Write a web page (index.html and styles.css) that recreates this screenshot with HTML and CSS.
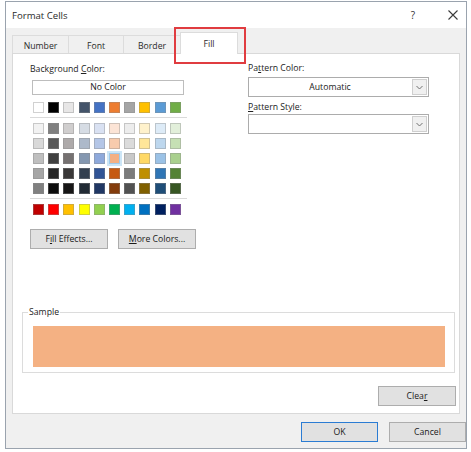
FILE: index.html
```html
<!DOCTYPE html>
<html>
<head>
<meta charset="utf-8">
<title>Format Cells</title>
<link rel="stylesheet" href="styles.css">
</head>
<body>
<div class="dialog">
  <div class="titlebar">
    <span class="title">Format Cells</span>
    <span class="help">?</span>
    <span class="close"><svg width="10" height="10" viewBox="0 0 10 10"><path d="M0.5 0.5L9.5 9.5M9.5 0.5L0.5 9.5" stroke="#3a3a3a" stroke-width="1.1" fill="none"/></svg></span>
  </div>
  <div class="tabs">
    <div class="tab t-number">Number</div>
    <div class="tab t-font">Font</div>
    <div class="tab t-border">Border</div>
    <div class="tab active">Fill<span class="highlight"></span></div>
  </div>
  <div class="panel">
    <div class="top">
      <div class="left">
        <div class="label">Background <u>C</u>olor:</div>
        <div class="nocolor">No Color</div>
        <div class="swatches">
          <span class="sw" style="background:#ffffff"></span>
          <span class="sw" style="background:#000000"></span>
          <span class="sw" style="background:#e7e6e6"></span>
          <span class="sw" style="background:#44546a"></span>
          <span class="sw" style="background:#4472c4"></span>
          <span class="sw" style="background:#ed7d31"></span>
          <span class="sw" style="background:#a5a5a5"></span>
          <span class="sw" style="background:#ffc000"></span>
          <span class="sw" style="background:#5b9bd5"></span>
          <span class="sw" style="background:#70ad47"></span>
        </div>
        <div class="sep"></div>
        <div class="swatches">
          <span class="sw" style="background:#f2f2f2"></span>
          <span class="sw" style="background:#808080"></span>
          <span class="sw" style="background:#d0cece"></span>
          <span class="sw" style="background:#d6dce4"></span>
          <span class="sw" style="background:#d9e1f2"></span>
          <span class="sw" style="background:#fce4d6"></span>
          <span class="sw" style="background:#ededed"></span>
          <span class="sw" style="background:#fff2cc"></span>
          <span class="sw" style="background:#ddebf7"></span>
          <span class="sw" style="background:#e2efda"></span>

          <span class="sw" style="background:#d9d9d9"></span>
          <span class="sw" style="background:#595959"></span>
          <span class="sw" style="background:#aeaaaa"></span>
          <span class="sw" style="background:#adb9ca"></span>
          <span class="sw" style="background:#b4c6e7"></span>
          <span class="sw" style="background:#f8cbad"></span>
          <span class="sw" style="background:#dbdbdb"></span>
          <span class="sw" style="background:#ffe699"></span>
          <span class="sw" style="background:#bdd7ee"></span>
          <span class="sw" style="background:#c6e0b4"></span>

          <span class="sw" style="background:#bfbfbf"></span>
          <span class="sw" style="background:#404040"></span>
          <span class="sw" style="background:#757171"></span>
          <span class="sw" style="background:#8497b0"></span>
          <span class="sw" style="background:#8ea9db"></span>
          <span class="sw selected" style="background:#f4b084"></span>
          <span class="sw" style="background:#c9c9c9"></span>
          <span class="sw" style="background:#ffd966"></span>
          <span class="sw" style="background:#9bc2e6"></span>
          <span class="sw" style="background:#a9d08e"></span>

          <span class="sw" style="background:#a6a6a6"></span>
          <span class="sw" style="background:#262626"></span>
          <span class="sw" style="background:#3a3838"></span>
          <span class="sw" style="background:#333f4f"></span>
          <span class="sw" style="background:#305496"></span>
          <span class="sw" style="background:#c65911"></span>
          <span class="sw" style="background:#7b7b7b"></span>
          <span class="sw" style="background:#bf8f00"></span>
          <span class="sw" style="background:#2f75b5"></span>
          <span class="sw" style="background:#548235"></span>

          <span class="sw" style="background:#808080"></span>
          <span class="sw" style="background:#0d0d0d"></span>
          <span class="sw" style="background:#171616"></span>
          <span class="sw" style="background:#222b35"></span>
          <span class="sw" style="background:#203764"></span>
          <span class="sw" style="background:#833c0c"></span>
          <span class="sw" style="background:#525252"></span>
          <span class="sw" style="background:#806000"></span>
          <span class="sw" style="background:#1f4e78"></span>
          <span class="sw" style="background:#375623"></span>
        </div>
        <div class="sep"></div>
        <div class="swatches">
          <span class="sw" style="background:#c00000"></span>
          <span class="sw" style="background:#ff0000"></span>
          <span class="sw" style="background:#ffc000"></span>
          <span class="sw" style="background:#ffff00"></span>
          <span class="sw" style="background:#92d050"></span>
          <span class="sw" style="background:#00b050"></span>
          <span class="sw" style="background:#00b0f0"></span>
          <span class="sw" style="background:#0070c0"></span>
          <span class="sw" style="background:#002060"></span>
          <span class="sw" style="background:#7030a0"></span>
        </div>
        <div class="btnrow">
          <button class="btn wide">F<u>i</u>ll Effects...</button>
          <button class="btn wide"><u>M</u>ore Colors...</button>
        </div>
      </div>
      <div class="right">
        <div class="label lbl-pc">Pa<u>t</u>tern Color:</div>
        <div class="dropdown dd1">
          <span class="value">Automatic</span>
          <span class="arrow"><svg width="7" height="5" viewBox="0 0 7 5"><path d="M0.5 1L3.5 4L6.5 1" stroke="#707070" stroke-width="1" fill="none"/></svg></span>
        </div>
        <div class="label lbl-ps"><u>P</u>attern Style:</div>
        <div class="dropdown dd2">
          <span class="value"></span>
          <span class="arrow"><svg width="7" height="5" viewBox="0 0 7 5"><path d="M0.5 1L3.5 4L6.5 1" stroke="#707070" stroke-width="1" fill="none"/></svg></span>
        </div>
      </div>
    </div>
    <div class="sample">
      <div class="legend">Sample</div>
      <div class="preview"></div>
    </div>
    <div class="clearrow">
      <button class="btn wide">Clea<u>r</u></button>
    </div>
  </div>
  <div class="footer">
    <button class="btn foot ok">OK</button>
    <button class="btn foot">Cancel</button>
  </div>
</div>
</body>
</html>
```

FILE: styles.css
```css
* { box-sizing: border-box; }
html, body { margin: 0; padding: 0; background: #ffffff; }
body {
  font-family: "Open Sans", "Noto Sans", sans-serif;
  font-size: 8.7px;
  color: #1a1a1a;
}
u { text-underline-offset: 1px; text-decoration-thickness: 1px; }

.dialog {
  margin: 1px 0 0 5px;
  width: 462px;
  height: 448px;
  border: 1px solid #9aa3ae;
  background: #f0f0f0;
  display: flex;
  flex-direction: column;
}

.titlebar {
  height: 26px;
  flex: none;
  background: #ffffff;
  display: flex;
  align-items: center;
  padding-left: 6px;
}
.title { flex: 1; font-size: 9.6px; color: #2a2a2a; }
.help {
  width: 20px;
  text-align: center;
  font-size: 10px;
  color: #333333;
}
.close {
  width: 20px;
  height: 20px;
  margin-left: 20px;
  margin-right: 3px;
  display: flex;
  align-items: center;
  justify-content: center;
}

.tabs {
  height: 25px;
  flex: none;
  display: flex;
  align-items: flex-end;
  padding-left: 6px;
}
.tab {
  height: 18px;
  border: 1px solid #dcdcdc;
  border-bottom: none;
  margin-right: -1px;
  background: #f0f0f0;
  display: flex;
  align-items: center;
  justify-content: center;
  padding-top: 3px;
  color: #2a2a2a;
}
.t-number { width: 57px; }
.t-font { width: 56px; }
.t-border { width: 58px; }
.tab.active {
  position: relative;
  width: 58px;
  height: 22px;
  margin-bottom: -1px;
  background: #ffffff;
  z-index: 1;
  padding-top: 1px;
}
.highlight {
  position: absolute;
  left: -7px;
  top: -6px;
  width: 72px;
  height: 37px;
  border: 2px solid #e03c40;
}

.panel {
  height: 361px;
  flex: none;
  margin: 0 6px;
  background: #ffffff;
  border: 1px solid #d9d9d9;
}
.top { display: flex; padding-left: 17px; }
.left { width: 157px; flex: none; }
.right { width: 181px; flex: none; margin-left: 61px; }

.label { line-height: 12px; margin-top: 9px; color: #222222; }
.nocolor {
  margin: 5px 0 0 2px;
  width: 152px;
  height: 15px;
  border: 1px solid #bdbdbd;
  text-align: center;
  line-height: 13px;
  color: #222222;
}
.swatches {
  margin-left: 3px;
  display: grid;
  grid-template-columns: repeat(10, 11px);
  grid-auto-rows: 11px;
  column-gap: 4.2px;
  row-gap: 4px;
}
.nocolor + .swatches { margin-top: 7px; }
.sw {
  display: block;
  width: 11px;
  height: 11px;
  border: 1px solid rgba(140, 140, 140, 0.4);
}
.sw.selected { box-shadow: 0 0 0 2px #cde6f7; border-color: #9fcaea; }
.sep {
  height: 1px;
  background: #dadada;
  margin: 4px 0 5px 0;
}
.btnrow {
  margin: 14px 0 0 0;
  display: flex;
  gap: 10px;
}

.btn {
  flex: none;
  font-family: inherit;
  font-size: inherit;
  color: #1a1a1a;
  background: #e1e1e1;
  border: 1px solid #adadad;
  padding: 0;
  height: 20px;
  line-height: 18px;
}
.btn.wide { width: 78px; }

.lbl-pc { margin-top: 8px; }
.lbl-ps { margin-top: 4px; }
.dropdown {
  height: 20px;
  border: 1px solid #acacac;
  background: #ffffff;
  display: flex;
}
.dd1 { margin-top: 3px; }
.dd2 { margin-top: 1px; }
.value { flex: 1; text-align: center; line-height: 18px; color: #222222; }
.arrow {
  width: 15px;
  margin: 1px;
  border: 1px solid #cfcfcf;
  background: #f0f0f0;
  display: flex;
  align-items: center;
  justify-content: center;
}

.sample {
  margin: 63px 0 0 9px;
  width: 433px;
  border: 1px solid #dcdcdc;
  padding: 0 9px 5px 10px;
}
.legend {
  width: fit-content;
  margin: -7px 0 0 -5px;
  padding: 0 1px;
  background: #ffffff;
  line-height: 12px;
  color: #222222;
}
.preview {
  margin-top: 8px;
  height: 41px;
  background: #f4b183;
}
.clearrow {
  margin-top: 13px;
  display: flex;
  justify-content: flex-end;
  padding-right: 3px;
}

.footer {
  flex: 1;
  display: flex;
  justify-content: flex-end;
  align-items: flex-start;
  padding-top: 8px;
  gap: 11px;
}
.btn.foot { width: 77px; }
.btn.ok { border-color: #2b7cd3; }
```
